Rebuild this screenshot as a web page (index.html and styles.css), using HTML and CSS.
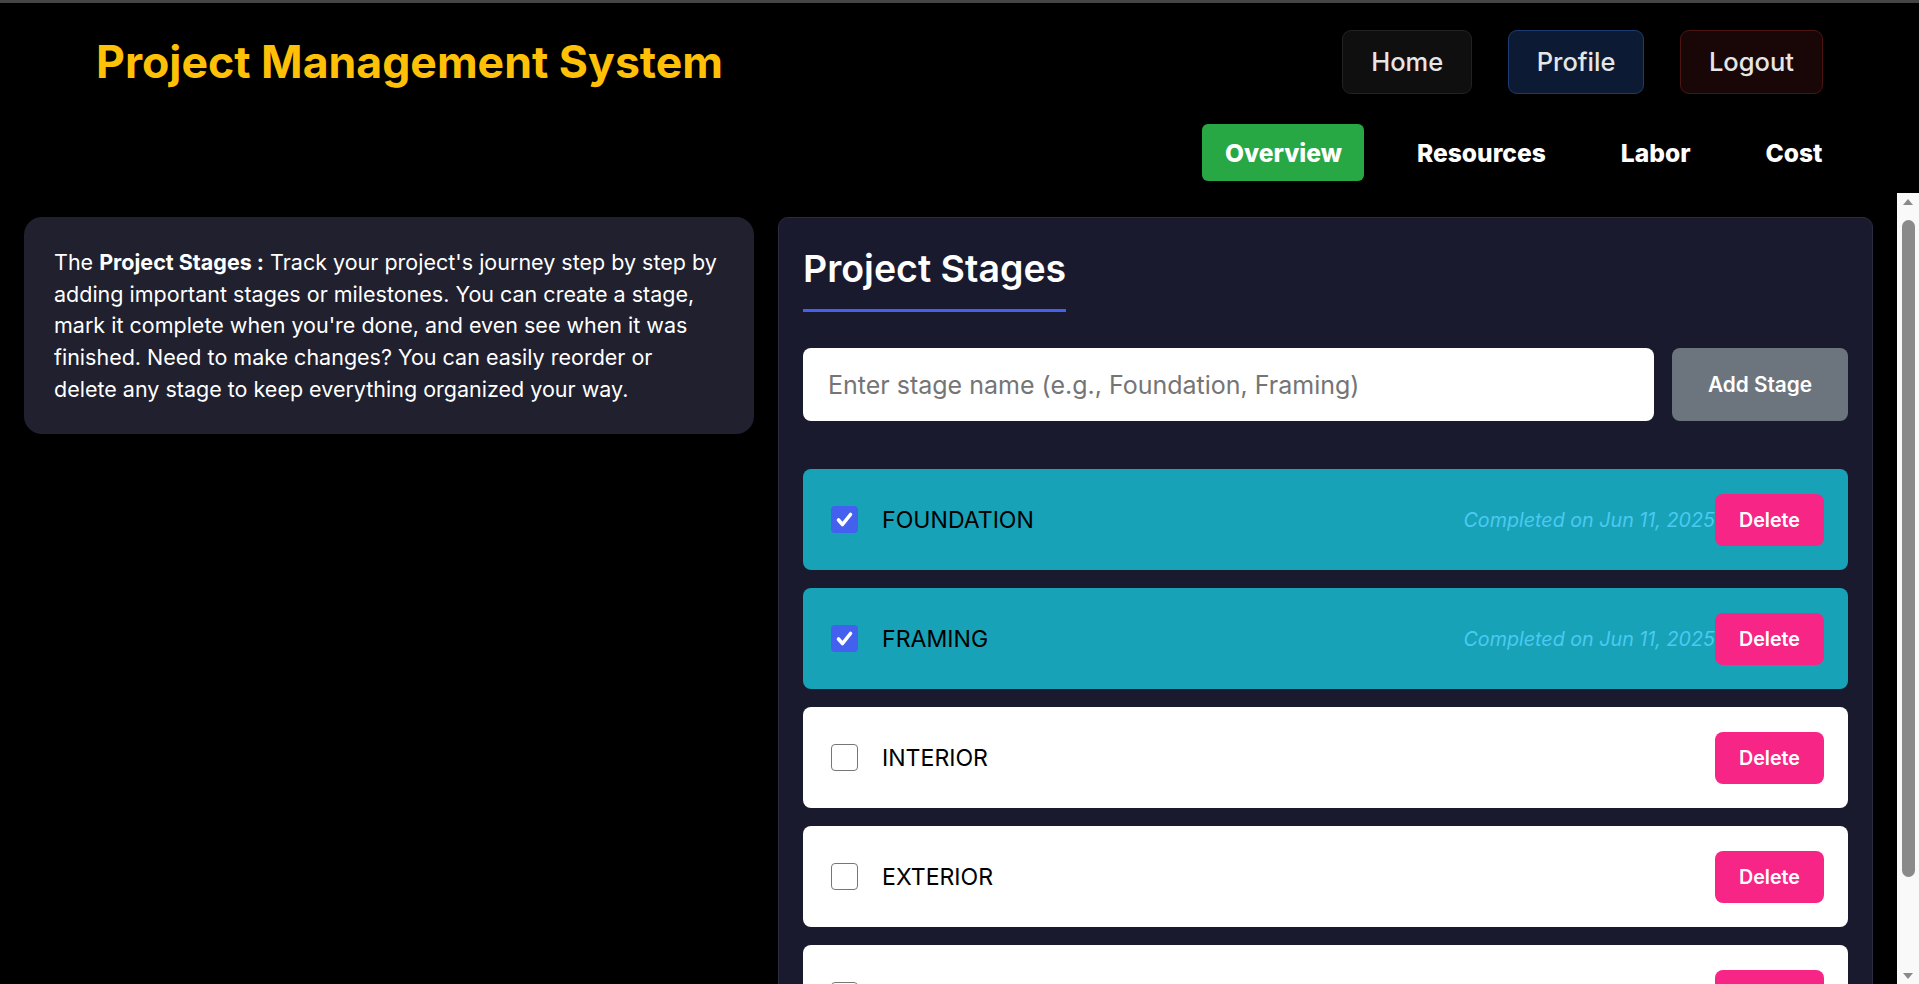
FILE: index.html
```html
<!DOCTYPE html>
<html lang="en">
<head>
<meta charset="utf-8">
<title>Project Management System</title>
<link rel="stylesheet" href="styles.css">
</head>
<body>
<div class="app">
  <header class="header">
    <div class="topbar">
      <h1 class="brand">Project Management System</h1>
      <nav class="mainnav">
        <a class="navbtn navbtn-home">Home</a>
        <a class="navbtn navbtn-profile">Profile</a>
        <a class="navbtn navbtn-logout">Logout</a>
      </nav>
    </div>
    <nav class="subnav">
      <a class="tab active">Overview</a>
      <a class="tab">Resources</a>
      <a class="tab">Labor</a>
      <a class="tab">Cost</a>
    </nav>
  </header>
  <div class="body-row">
    <main class="content">
      <aside class="info">
        <p class="info-text">The <strong>Project Stages :</strong> Track your project's journey step by step by adding important stages or milestones. You can create a stage, mark it complete when you're done, and even see when it was finished. Need to make changes? You can easily reorder or <span class="nowrap">delete any</span> stage to keep everything organized your way.</p>
      </aside>
      <section class="panel">
        <h2 class="panel-title">Project Stages</h2>
        <form class="add-form">
          <input class="stage-input" type="text" placeholder="Enter stage name (e.g., Foundation, Framing)">
          <button class="btn-add" type="button">Add Stage</button>
        </form>
        <ul class="stage-list">
          <li class="stage done">
            <span class="check checked"><svg viewBox="0 0 27 27" width="27" height="27"><polyline points="7.5,14 11.5,18.5 19.5,8.5" fill="none" stroke="#fff" stroke-width="3.6" stroke-linecap="round" stroke-linejoin="round"/></svg></span>
            <span class="stage-name">FOUNDATION</span>
            <span class="stage-date">Completed on Jun 11, 2025</span>
            <button class="btn-delete" type="button">Delete</button>
          </li>
          <li class="stage done">
            <span class="check checked"><svg viewBox="0 0 27 27" width="27" height="27"><polyline points="7.5,14 11.5,18.5 19.5,8.5" fill="none" stroke="#fff" stroke-width="3.6" stroke-linecap="round" stroke-linejoin="round"/></svg></span>
            <span class="stage-name">FRAMING</span>
            <span class="stage-date">Completed on Jun 11, 2025</span>
            <button class="btn-delete" type="button">Delete</button>
          </li>
          <li class="stage">
            <span class="check"></span>
            <span class="stage-name">INTERIOR</span>
            <button class="btn-delete" type="button">Delete</button>
          </li>
          <li class="stage">
            <span class="check"></span>
            <span class="stage-name">EXTERIOR</span>
            <button class="btn-delete" type="button">Delete</button>
          </li>
          <li class="stage">
            <span class="check"></span>
            <span class="stage-name">FINISHING</span>
            <button class="btn-delete" type="button">Delete</button>
          </li>
        </ul>
      </section>
    </main>
    <div class="scrollbar" aria-hidden="true">
      <span class="sb-arrow sb-up"></span>
      <span class="sb-track"><span class="sb-thumb"></span></span>
      <span class="sb-arrow sb-down"></span>
    </div>
  </div>
</div>
</body>
</html>
```

FILE: styles.css
```css
* { box-sizing: border-box; }
html, body { margin: 0; height: 100%; }
body {
  background: #000;
  color: #fff;
  font-family: "Inter", "Open Sans", sans-serif;
  border-top: 3px solid #454545;
  overflow: hidden;
}
.app { height: 100%; display: flex; flex-direction: column; }

/* Header */
.header { padding: 27px 74px 12px 96px; flex: none; }
.topbar { display: flex; align-items: center; justify-content: space-between; height: 64px; }
.brand { margin: 0; font-size: 44.6px; font-weight: 700; color: #ffc107; line-height: 1; }
.mainnav { display: flex; gap: 36px; margin-right: 22px; }
.navbtn {
  display: block;
  font-size: 25.5px; line-height: 36px; font-weight: 500;
  color: #e6e6e6;
  padding: 13px 28px;
  border: 1px solid #222;
  border-radius: 9px;
  background: #0f0f0f;
}
.navbtn-profile { background: #0c1a33; border-color: #1d3b72; padding: 13px 27.5px; }
.navbtn-logout { background: #190707; border-color: #4d1414; }

.subnav { display: flex; justify-content: flex-end; gap: 30px; margin-top: 30px; }
.tab {
  display: block;
  font-size: 24.6px; line-height: 36px; font-weight: 800;
  color: #fff;
  padding: 10.5px 22.5px;
  border-radius: 6px;
}
.tab.active { background: #28a745; }

/* Body: scroll area + scrollbar */
.body-row { flex: 1; min-height: 0; display: flex; }
.content {
  flex: 1;
  min-width: 0;
  overflow-y: auto;
  scrollbar-width: none;
  display: grid;
  grid-template-columns: 2fr 3fr;
  gap: 24px;
  padding: 24px;
  align-items: start;
}
.scrollbar {
  flex: none;
  width: 22px;
  background: #f9f9f9;
  display: flex;
  flex-direction: column;
}
.sb-arrow { height: 17px; display: flex; align-items: center; justify-content: center; flex: none; }
.sb-arrow::before { content: ""; width: 0; height: 0; border-left: 5px solid transparent; border-right: 5px solid transparent; }
.sb-up::before { border-bottom: 6px solid #8a8a8a; }
.sb-down::before { border-top: 6px solid #8a8a8a; }
.sb-track { flex: 1; padding: 10px 4px 0 5px; }
.sb-thumb { display: block; height: 657px; background: #8a8a8a; border-radius: 7px; }

/* Info card */
.info {
  background: #20202f;
  border-radius: 18px;
  padding: 30px 30px 28px;
}
.info-text { margin: 0; font-size: 21.5px; line-height: 31.7px; color: #fff; }
.info-text strong { font-weight: 700; }
.nowrap { white-space: nowrap; }

/* Panel */
.panel {
  background: #1a1a2e;
  border: 1px solid #2b2b42;
  border-radius: 10px;
  padding: 29px 24px 24px;
}
.panel-title {
  display: inline-block;
  margin: 0;
  font-size: 37.5px; line-height: 44px; font-weight: 600;
  color: #fff;
  padding-bottom: 18px;
  border-bottom: 3px solid #4361ee;
}
.add-form { display: flex; gap: 18px; margin-top: 36px; }
.stage-input {
  flex: 1;
  min-width: 0;
  height: 73px;
  border: none;
  border-radius: 8px;
  background: #fff;
  padding: 0 25px;
  font: inherit;
  font-size: 25px;
  color: #333;
  outline: none;
}
.stage-input::placeholder { color: #757575; }
.btn-add {
  flex: none;
  width: 176px; height: 73px;
  border: none; border-radius: 8px;
  background: #6c757d;
  color: #fff;
  font: inherit; font-size: 20.8px; font-weight: 600;
}

.stage-list { list-style: none; margin: 48px 0 0; padding: 0; display: flex; flex-direction: column; gap: 18px; }
.stage {
  display: flex; align-items: center;
  height: 101px;
  padding: 0 24px;
  background: #fff;
  border-radius: 8px;
}
.stage.done { background: #17a2b8; }
.check {
  flex: none;
  width: 27px; height: 27px;
  margin: 0 24px 0 4px;
  border: 1.5px solid #767676;
  border-radius: 4px;
  background: #fff;
}
.check.checked { background: #4361ee; border: none; }
.check svg { display: block; }
.stage-name { font-size: 23.1px; color: #000; font-weight: 400; }
.stage-date { margin-left: auto; font-size: 19.7px; font-style: italic; color: #4cc9f0; }
.btn-delete {
  margin-left: auto;
  height: 52px;
  padding: 0 24px;
  border: none; border-radius: 8px;
  background: #f72585;
  color: #fff;
  font: inherit; font-size: 19.7px; font-weight: 600;
}
.stage-date + .btn-delete { margin-left: 0; }
```
